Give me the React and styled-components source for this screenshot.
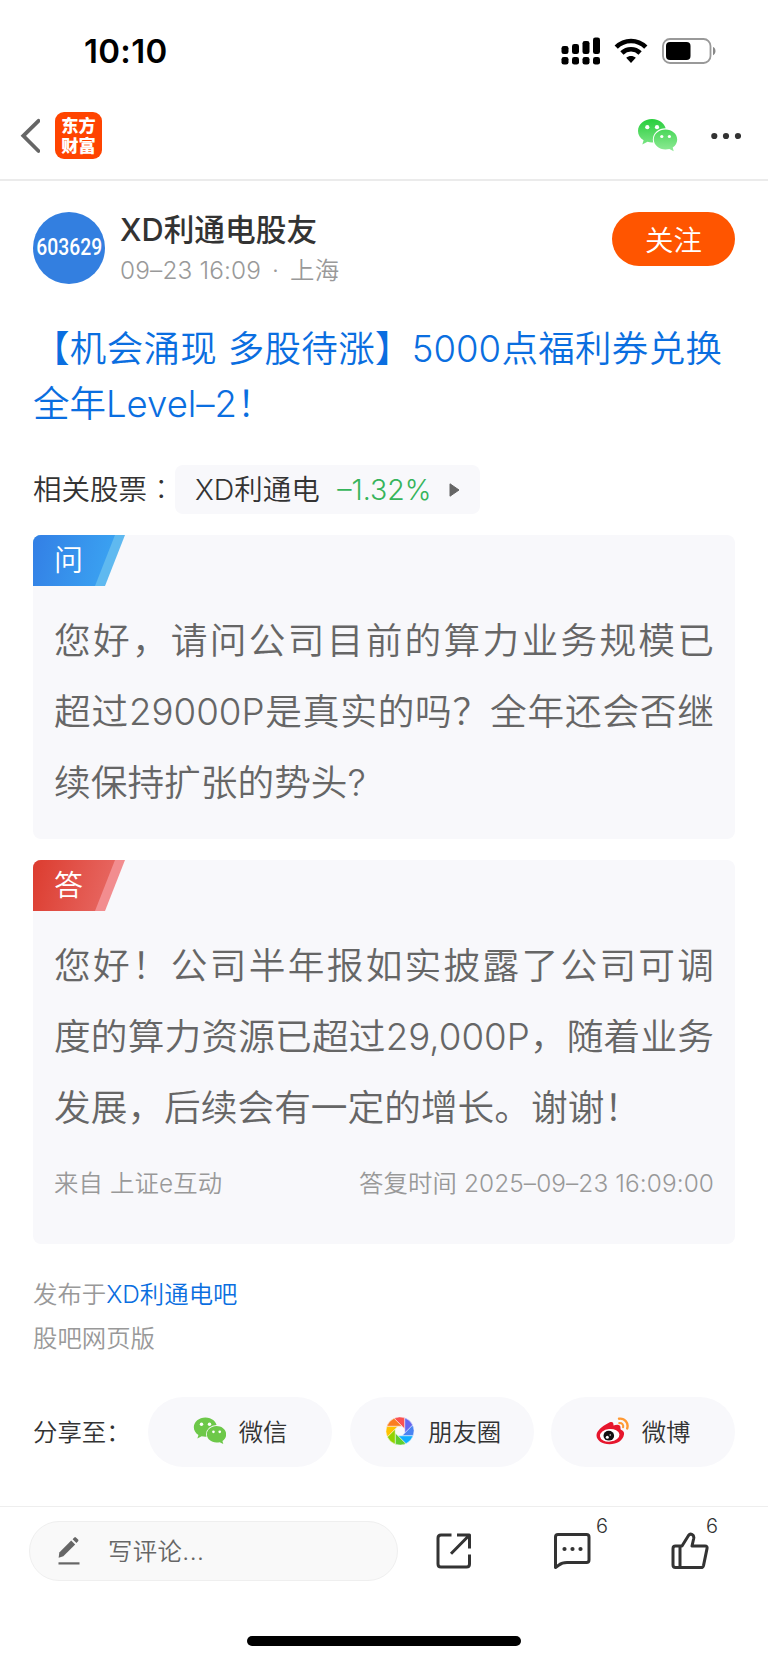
import styled, { createGlobalStyle } from "styled-components";

const GlobalStyle = createGlobalStyle`
  * {
    box-sizing: border-box;
  }
  body {
    margin: 0;
    background: #fff;
    color: #333;
    font-family: Inter, "Noto Sans CJK SC", sans-serif;
    font-weight: 350;
  }
`;

const WechatShape = ({ fill, cut }) => (
  <>
    <path
      fill={fill}
      d="M14 0C6.3 0 0 5.2 0 11.9c0 3.8 2 7.2 5.6 9.4L4.3 25.6l5.2-2.8c1.5.4 3 .6 4.5.6 7.7 0 14-5.2 14-11.7S21.7 0 14 0Z"
    />
    <ellipse cx="27.5" cy="20.5" rx="12.7" ry="11.3" fill={cut} />
    <path
      fill={fill}
      d="M27.5 10.5c-6.5 0-11.7 4.4-11.7 10s5.2 10 11.7 10c1.3 0 2.6-.2 3.9-.5l4.3 2.2-1-3.7c2.9-1.9 4.5-4.7 4.5-8 0-5.6-5.2-10-11.7-10Z"
    />
    <circle cx="9.3" cy="8.2" r="2.1" fill="#fff" />
    <circle cx="19" cy="8.2" r="2.1" fill="#fff" />
    <circle cx="23.8" cy="17.5" r="1.6" fill="#fff" />
    <circle cx="31.4" cy="17.5" r="1.6" fill="#fff" />
  </>
);

const momentColors = [
  "#fa5151",
  "#6467f0",
  "#4a83f2",
  "#10aeff",
  "#5fcf2f",
  "#91d300",
  "#ffc300",
  "#fa7d20",
];

const polar = (r, deg) => {
  const a = (deg * Math.PI) / 180;
  return `${(14 + r * Math.cos(a)).toFixed(2)} ${(14 + r * Math.sin(a)).toFixed(2)}`;
};

const MomentsIcon = () => (
  <svg width="33" height="28" viewBox="-4 0 33 28">
    {momentColors.map((color, i) => {
      const a = -45 + i * 45;
      return (
        <path
          key={color}
          fill={color}
          stroke="#f8f8fb"
          strokeWidth="0.5"
          d={`M${polar(14, a - 70)}A14 14 0 0 1 ${polar(14, a - 25)}L${polar(5.2, a + 22.5)}Z`}
        />
      );
    })}
  </svg>
);

const WeiboIcon = () => (
  <svg width="33" height="28" viewBox="0 0 33 28">
    <path
      fill="#e6162d"
      d="M12 6.2C15 4.3 17.8 4.1 17.5 8.6c2.8-1.3 7.4-1.9 7 2.6-.1.9.1 1.3 1 1.7 1.7.8 3 2.2 2.500 4.6C27 23.6 21 27.2 13.5 27.2 6 27.2.5 23.5.5 18.3.5 14 6 9.2 12 6.2Z"
    />
    <ellipse cx="13.7" cy="18.3" rx="9.8" ry="6.3" fill="#fff" transform="rotate(-6 13.7 18.3)" />
    <ellipse cx="12.8" cy="18.7" rx="5.3" ry="4.9" fill="#111" />
    <circle cx="11.3" cy="20.2" r="1.5" fill="#fff" />
    <circle cx="14.2" cy="18" r="0.7" fill="#fff" />
    <g fill="none" stroke="#ff9933" strokeLinecap="round">
      <path strokeWidth="2.4" d="M23 1.7c5.8-.7 9.8 4.3 8.2 9.7" />
      <path strokeWidth="2.1" d="M23.3 6.1c2.7-.3 4.5 1.7 3.8 4.2" />
    </g>
  </svg>
);

const App = () => (
  <Page>
    <GlobalStyle />
    <StatusBar>
      <Clock>10:10</Clock>
      <StatusIcons>
        <svg width="39" height="28" viewBox="0 0 39 28">
          <rect x="0.5" y="9" width="7" height="8" rx="2.3" />
          <rect x="11" y="7" width="7" height="10" rx="2.3" />
          <rect x="21.5" y="4" width="7" height="13" rx="2.3" />
          <rect x="32" y="0.5" width="7" height="16.5" rx="2.3" />
          <rect x="0.5" y="20" width="7" height="7.5" rx="2.3" />
          <rect x="11" y="20" width="7" height="7.5" rx="2.3" />
          <rect x="21.5" y="20" width="7" height="7.5" rx="2.3" />
          <rect x="32" y="20" width="7" height="7.5" rx="2.3" />
        </svg>
        <svg width="34" height="26" viewBox="0 0 34 26">
          <g fill="none" stroke="#000" strokeWidth="4.6">
            <path d="M2.2 9.2C10.5.9 23.5.9 31.8 9.2" />
            <path d="M7.9 15c5.1-5 13.1-5 18.2 0" />
          </g>
          <path d="M12.2 19.8c2.8-2.3 6.8-2.3 9.600 0L17 24.9Z" />
        </svg>
        <svg width="54" height="26" viewBox="0 0 54 26">
          <rect x="1" y="1" width="47.5" height="24" rx="7" fill="none" stroke="#999" strokeWidth="1.8" />
          <rect x="4" y="4" width="24.5" height="18" rx="4" />
          <path fill="#888" d="M51 9c3.3 1.1 3.3 7 0 8.2Z" />
        </svg>
      </StatusIcons>
    </StatusBar>

    <NavBar>
      <svg width="20" height="36" viewBox="0 0 20 36">
        <path d="M18.5 2.8 3.3 17.8 18.5 33" fill="none" stroke="#666" strokeWidth="3.8" strokeLinecap="round" />
      </svg>
      <AppLogo>
        东方
        <br />
        财富
      </AppLogo>
      <NavActions>
        <svg width="40" height="33" viewBox="0 0 40 33">
          <defs>
            <linearGradient id="wechat" gradientUnits="userSpaceOnUse" x1="0" y1="0" x2="0" y2="32">
              <stop offset="0" stopColor="#28ce3c" />
              <stop offset="1" stopColor="#8fea96" />
            </linearGradient>
          </defs>
          <WechatShape fill="url(#wechat)" cut="#fff" />
        </svg>
        <svg width="30" height="8" viewBox="0 0 30 8" fill="#333">
          <circle cx="3.3" cy="4" r="3.1" />
          <circle cx="15" cy="4" r="3.1" />
          <circle cx="27" cy="4" r="3.1" />
        </svg>
      </NavActions>
    </NavBar>

    <Post>
      <Author>
        <Avatar>
          <span>603629</span>
        </Avatar>
        <AuthorInfo>
          <AuthorName>XD利通电股友</AuthorName>
          <PostMeta>
            <span>09–23 16:09</span>
            <i>·</i>
            <span>上海</span>
          </PostMeta>
        </AuthorInfo>
        <FollowButton>关注</FollowButton>
      </Author>

      <Title>
        <Line $full>【机会涌现 多股待涨】5000点福利券兑换</Line>
        <Line>全年Level–2！</Line>
      </Title>

      <Related>
        <RelatedLabel>
          相关股票<Colon>：</Colon>
        </RelatedLabel>
        <StockChip>
          <span>XD利通电</span>
          <Change>–1.32%</Change>
          <svg width="11" height="14" viewBox="0 0 11 14">
            <path d="M1 .8 10 7 1 13.2Z" fill="#666" stroke="#666" strokeLinejoin="round" />
          </svg>
        </StockChip>
      </Related>

      <Card $height={304}>
        <Tag $edge="#5fb9f0">
          <TagFill $from="#337fe5" $to="#3ba6f3">
            问
          </TagFill>
        </Tag>
        <Body>
          <Line $full>您好，请问公司目前的算力业务规模已</Line>
          <Line $full>超过29000P是真实的吗？全年还会否继</Line>
          <Line>续保持扩张的势头?</Line>
        </Body>
      </Card>

      <Card $height={384}>
        <Tag $edge="#f28d8f">
          <TagFill $from="#dc3c2f" $to="#e86b66">
            答
          </TagFill>
        </Tag>
        <Body>
          <Line $full>您好！公司半年报如实披露了公司可调</Line>
          <Line $full>度的算力资源已超过29,000P，随着业务</Line>
          <Line>发展，后续会有一定的增长。谢谢！</Line>
        </Body>
        <Source>
          <span>来自 上证e互动</span>
          <span>答复时间 2025–09–23 16:09:00</span>
        </Source>
      </Card>

      <Published>
        <p>
          发布于<a>XD利通电吧</a>
        </p>
        <p>股吧网页版</p>
      </Published>

      <Share>
        <ShareLabel>分享至：</ShareLabel>
        <ShareButton>
          <svg width="33" height="28" viewBox="-1 0 40 33">
            <WechatShape fill="#6dc849" cut="#f8f8fb" />
          </svg>
          微信
        </ShareButton>
        <ShareButton>
          <MomentsIcon />
          朋友圈
        </ShareButton>
        <ShareButton>
          <WeiboIcon />
          微博
        </ShareButton>
      </Share>
    </Post>

    <BottomBar>
      <CommentInput>
        <svg width="22" height="30" viewBox="0 0 22 30" fill="#666">
          <path d="M.7 21.2 1.3 16.5 13.2 4.6l4 4L5.3 20.2.7 21.7Z" />
          <path d="m14.6 3.2 1.7-1.8q.8-.8 1.6 0l2.2 2.2q.8.8 0 1.6l-1.7 1.8Z" />
          <rect x="0.5" y="26.3" width="21" height="2.2" />
        </svg>
        <span>写评论...</span>
      </CommentInput>
      <Action>
        <svg width="36" height="36" viewBox="0 0 36 36">
          <path d="M15.5 2H5Q2 2 2 5v26q0 3 3 3h25.5q3 0 3-3V21.5M21 2h12.5v13.5M33 2.5 15 20.8" />
        </svg>
      </Action>
      <Action>
        <svg width="38" height="36" viewBox="0 0 38 36">
          <path d="M5 1.5h28.5q2.5 0 2.5 2.5v23q0 2.5-2.5 2.5H14q-5 0-8 2.5l-3.5 2.5V4q0-2.5 2.5-2.5Z" />
          <g fill="#333" stroke="none">
            <circle cx="11.5" cy="16" r="2.1" />
            <circle cx="19.5" cy="16" r="2.1" />
            <circle cx="27.5" cy="16" r="2.1" />
          </g>
        </svg>
        <Count $left={83}>6</Count>
      </Action>
      <Action>
        <svg width="38" height="38" viewBox="0 0 38 38">
          <path d="M9 14h2L17.5 3.5q1.5-2 3.5-1 2.3 1 1.7 4L21 14h13q2.6 0 2 2.6l-3.5 17q-.5 2-2.5 2H4.5Q2 35.5 2 33V16.5Q2 14 4.5 14H9v21.5" />
        </svg>
        <Count $left={75}>6</Count>
      </Action>
    </BottomBar>
    <HomeIndicator />
  </Page>
);

const Page = styled.main`
  width: 768px;
  height: 1663px;
  overflow: hidden;
  display: flex;
  flex-direction: column;
`;

const StatusBar = styled.div`
  height: 92px;
  padding: 10px 52px 0 84px;
  display: flex;
  justify-content: space-between;
  align-items: center;
`;

const Clock = styled.span`
  color: #000;
  font-size: 33px;
  font-weight: 600;
  letter-spacing: 0.3px;
`;

const StatusIcons = styled.div`
  display: flex;
  align-items: center;
  gap: 14px;
`;

const NavBar = styled.header`
  height: 89px;
  padding: 0 27px 0 20px;
  border-bottom: 2px solid #ebebeb;
  display: flex;
  align-items: center;
`;

const AppLogo = styled.div`
  width: 47px;
  height: 47px;
  margin-left: 15px;
  padding-top: 3px;
  border-radius: 9px;
  background: #ff4400;
  color: #fff;
  text-align: center;
  font: 900 17.2px/19.5px "Noto Sans CJK SC", sans-serif;
`;

const NavActions = styled.div`
  margin-left: auto;
  display: flex;
  align-items: center;
  gap: 33px;
`;

const Post = styled.article`
  height: 1325px;
  padding: 31px 33px 0;
`;

const Author = styled.div`
  display: flex;
  height: 72px;
`;

const Avatar = styled.div`
  width: 72px;
  height: 72px;
  border-radius: 50%;
  background: #337fe0;
  color: #fff;
  display: flex;
  align-items: center;
  justify-content: center;
  span {
    font: 500 23px/1 Roboto, sans-serif;
    margin: -2px -10px 0;
    transform: scaleX(0.84);
  }
`;

const AuthorInfo = styled.div`
  margin-left: 15px;
`;

const AuthorName = styled.div`
  font-size: 30.7px;
  line-height: 35px;
  font-weight: 500;
`;

const PostMeta = styled.div`
  display: flex;
  margin-top: 5px;
  color: #999;
  font-size: 24.4px;
  line-height: 36px;
  letter-spacing: 0.15px;
  i {
    width: 29px;
    text-align: center;
    font-style: normal;
  }
`;

const FollowButton = styled.button`
  width: 123px;
  height: 54px;
  margin-left: auto;
  padding: 0 0 2px;
  border: none;
  border-radius: 27px;
  background: #ff5500;
  color: #fff;
  font: inherit;
  font-size: 28.5px;
`;

const Line = styled.span`
  display: block;
  white-space: nowrap;
  text-align: left;
  text-align-last: ${({ $full }) => ($full ? "justify" : "left")};
`;

const Title = styled.h1`
  margin: 38px 13px 0 0;
  color: #0a6ee0;
  font-size: 36.5px;
  line-height: 55px;
  font-weight: inherit;
`;

const Related = styled.div`
  margin-top: 33px;
  height: 49px;
  display: flex;
  align-items: center;
  font-size: 28.5px;
  line-height: 40px;
`;

const RelatedLabel = styled.span`
  width: 142px;
  padding-bottom: 1px;
  white-space: nowrap;
`;

const Colon = styled.span`
  font-family: "Noto Sans CJK TC", sans-serif;
  font-weight: 300;
`;

const StockChip = styled.div`
  height: 49px;
  width: 305px;
  padding: 0 20px;
  border-radius: 8px;
  background: #f8f8fb;
  display: flex;
  align-items: center;
  justify-content: space-between;
`;

const Change = styled.span`
  color: #36b45b;
`;

const Card = styled.section`
  height: ${({ $height }) => $height}px;
  margin-top: 21px;
  border-radius: 8px;
  background: #f8f8fb;
  overflow: hidden;
`;

const Tag = styled.div`
  width: 92px;
  height: 51px;
  clip-path: polygon(0 0, 100% 0, 72px 100%, 0 100%);
  background: ${({ $edge }) => $edge};
`;

const TagFill = styled.div`
  width: 82px;
  height: 51px;
  padding-left: 21px;
  clip-path: polygon(0 0, 100% 0, 62px 100%, 0 100%);
  background: linear-gradient(105deg, ${({ $from }) => $from}, ${({ $to }) => $to});
  color: #fff;
  font-size: 29px;
  line-height: 51px;
`;

const Body = styled.div`
  padding: 19px 21px 0;
  color: #666;
  font-size: 36.7px;
  line-height: 71px;
`;

const Source = styled.div`
  display: flex;
  justify-content: space-between;
  padding: 22px 21px 0;
  color: #999;
  font-size: 24.4px;
  line-height: 36px;
  letter-spacing: 0.1px;
`;

const Published = styled.div`
  margin-top: 28px;
  color: #999;
  font-size: 24.4px;
  line-height: 44px;
  p {
    margin: 0;
  }
  a {
    color: #0a6ee0;
  }
`;

const Share = styled.div`
  display: flex;
  align-items: center;
  gap: 17.5px;
  height: 70px;
  margin-top: 37px;
  font-size: 24.4px;
`;

const ShareLabel = styled.span`
  width: 98px;
  padding-bottom: 4px;
  white-space: nowrap;
`;

const ShareButton = styled.button`
  flex: none;
  width: 184px;
  height: 70px;
  padding: 0 0 4px;
  border: none;
  border-radius: 35px;
  background: #f8f8fb;
  color: inherit;
  font: inherit;
  display: flex;
  align-items: center;
  justify-content: center;
  gap: 13px;
  svg {
    margin-top: 1px;
  }
`;

const BottomBar = styled.footer`
  height: 76px;
  padding: 14px 0 0 29px;
  border-top: 1px solid #eee;
  display: flex;
`;

const CommentInput = styled.div`
  width: 369px;
  height: 60px;
  margin-right: -3px;
  padding-left: 28px;
  border: 1px solid #efefef;
  border-radius: 30px;
  background: #f9f9f9;
  color: #666;
  font-size: 24.4px;
  display: flex;
  align-items: center;
  gap: 28px;
  span {
    padding-bottom: 3px;
    letter-spacing: 0.4px;
  }
`;

const Action = styled.div`
  position: relative;
  width: 118px;
  height: 60px;
  display: flex;
  align-items: center;
  justify-content: center;
  svg {
    fill: none;
    stroke: #333;
    stroke-width: 3;
    stroke-linejoin: round;
  }
`;

const Count = styled.span`
  position: absolute;
  left: ${({ $left }) => $left}px;
  top: -7px;
  font-size: 20px;
  line-height: 24px;
`;

const HomeIndicator = styled.div`
  width: 274px;
  height: 10px;
  margin: 54px auto 0;
  border-radius: 5px;
  background: #000;
`;

export default App;
